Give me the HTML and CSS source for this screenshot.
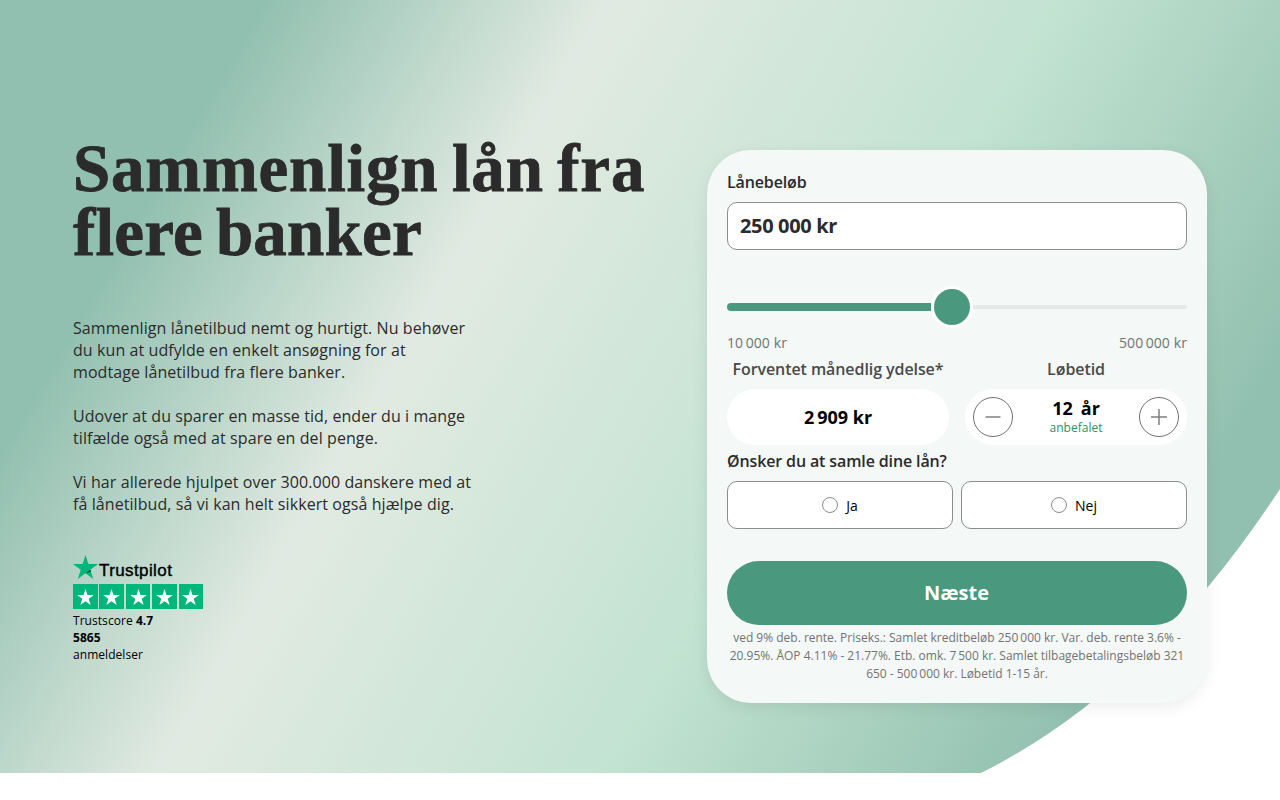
FILE: index.html
```html
<!DOCTYPE html>
<html lang="da">
<head>
    <meta charset="UTF-8">
    <meta name="viewport" content="width=device-width, initial-scale=1.0">
    <title>Sammenlign lån fra flere banker</title>
    <link rel="stylesheet" href="styles.css">
</head>
<body>
    <svg class="defs" width="0" height="0">
        <symbol id="star" viewBox="0 0 24 23">
            <path d="M12 0l2.8 8.7H24l-7.4 5.4L19.4 23 12 17.5 4.6 23l2.8-8.9L0 8.7h9.2z"/>
        </symbol>
    </svg>
    <section class="hero">
        <div class="intro">
            <h1>Sammenlign lån fra <span>flere banker</span></h1>
            <div class="text">
                <p>Sammenlign lånetilbud nemt og hurtigt. Nu behøver du kun at udfylde en enkelt ansøgning for at modtage lånetilbud fra flere banker.</p>
                <p>Udover at du sparer en masse tid, ender du i mange tilfælde også med at spare en del penge.</p>
                <p>Vi har allerede hjulpet over 300.000 danskere med at få lånetilbud, så vi kan helt sikkert også hjælpe dig.</p>
            </div>
            <div class="trustpilot">
                <div class="tp-logo">
                    <svg class="tp-star" viewBox="0 0 24 23">
                        <use href="#star" width="24" height="23"/>
                        <path class="tp-shade" d="M17.3 16.1l-.7-2-4.6 3.4z"/>
                    </svg>
                    <span>Trustpilot</span>
                </div>
                <div class="tp-rating">
                    <span class="tp-box"><svg><use href="#star"/></svg></span>
                    <span class="tp-box"><svg><use href="#star"/></svg></span>
                    <span class="tp-box"><svg><use href="#star"/></svg></span>
                    <span class="tp-box"><svg><use href="#star"/></svg></span>
                    <span class="tp-box"><svg><use href="#star"/></svg></span>
                </div>
                <div class="tp-text">Trustscore <b>4.7</b><br><b>5865</b><br>anmeldelser</div>
            </div>
        </div>

        <form class="card">
            <label class="label" for="amount">Lånebeløb</label>
            <input class="amount" id="amount" type="text" value="250 000 kr">
            <div class="slider">
                <div class="slider-fill"></div>
                <div class="slider-thumb"></div>
                <div class="slider-rest"></div>
            </div>
            <div class="range">
                <span>10&thinsp;000 kr</span>
                <span>500&thinsp;000 kr</span>
            </div>
            <div class="row">
                <div class="col">
                    <div class="col-title">Forventet månedlig ydelse*</div>
                    <div class="pill monthly">2&thinsp;909 kr</div>
                </div>
                <div class="col">
                    <div class="col-title">Løbetid</div>
                    <div class="pill years">
                        <button type="button" class="round" aria-label="Minus">
                            <svg viewBox="0 0 16 16"><path d="M.5 8h15"/></svg>
                        </button>
                        <div class="years-value">
                            <b>12</b><b>år</b>
                            <small>anbefalet</small>
                        </div>
                        <button type="button" class="round" aria-label="Plus">
                            <svg viewBox="0 0 16 16"><path d="M0 8h16M8 0v16"/></svg>
                        </button>
                    </div>
                </div>
            </div>
            <div class="label question">Ønsker du at samle dine lån?</div>
            <div class="choices">
                <label class="choice"><input type="radio" name="collect">Ja</label>
                <label class="choice"><input type="radio" name="collect">Nej</label>
            </div>
            <button type="button" class="next">Næste</button>
            <p class="terms">ved 9% deb. rente. Priseks.: Samlet kreditbeløb 250&thinsp;000 kr. Var. deb. rente 3.6% - 20.95%. ÅOP 4.11% - 21.77%. Etb. omk. 7&thinsp;500 kr. Samlet tilbagebetalingsbeløb 321 650 - 500&thinsp;000 kr. Løbetid 1-15 år.</p>
        </form>
    </section>
</body>
</html>
```
FILE: styles.css
```css
* {
    box-sizing: border-box;
}
body {
    margin: 0;
    background: #fff;
    color: #2b2b2b;
    font-family: "Open Sans", sans-serif;
    overflow: hidden;
}
.defs {
    display: block;
}
.hero {
    position: relative;
    display: flex;
    align-items: flex-start;
    justify-content: space-between;
    height: 773px;
    padding: 0 73px;
}
.hero::before {
    content: "";
    position: absolute;
    inset: 0;
    z-index: -1;
    background: linear-gradient(120.3deg, #92c0b0 15.4%, #e1eae2 35.2%, #c3e3d1 61.2%, #92c0b0 86%);
    clip-path: path("M0 0H1280V489Q1149 689 981 773H0Z");
}
.intro {
    width: 600px;
    padding-top: 136px;
}
h1 {
    margin: 0;
    font-family: "Liberation Serif", serif;
    font-size: 67px;
    font-weight: 700;
    line-height: 64px;
    letter-spacing: 0.8px;
    word-spacing: -4px;
    white-space: nowrap;
    -webkit-text-stroke: 0.8px #2b2b2b;
}
h1 span {
    display: block;
    letter-spacing: 0.2px;
}
.text {
    width: 402px;
    margin-top: 53px;
    font-size: 16px;
    line-height: 22px;
    letter-spacing: 0.08px;
}
.text p {
    margin: 0 0 22px;
}
.trustpilot {
    width: 130px;
    margin-top: 40px;
    color: #000;
}
.tp-logo {
    display: flex;
    align-items: flex-end;
    height: 24px;
    font-family: "Liberation Sans", sans-serif;
    font-size: 17px;
    line-height: 20px;
    letter-spacing: 0.4px;
    -webkit-text-stroke: 0.4px #000;
}
.tp-logo span {
    margin: 0 0 -2px 1px;
}
.tp-star {
    width: 25px;
    height: 24px;
    fill: #00b67a;
}
.tp-shade {
    fill: #005128;
}
.tp-rating {
    display: flex;
    justify-content: space-between;
    margin-top: 5px;
}
.tp-box {
    display: flex;
    align-items: center;
    justify-content: center;
    width: 24.5px;
    height: 25px;
    background: #00b67a;
}
.tp-box svg {
    width: 17px;
    height: 16px;
    fill: #fff;
}
.tp-text {
    margin-top: 3px;
    font-size: 12px;
    line-height: 17px;
    letter-spacing: 0.05px;
}
.card {
    width: 500px;
    height: 553px;
    margin-top: 150px;
    padding: 20px;
    border-radius: 44px;
    background: #f4f8f7;
    box-shadow: 0 4px 16px rgba(0,0,0,0.08);
}
.label {
    display: block;
    font-size: 16px;
    font-weight: 600;
    line-height: 24px;
    letter-spacing: -0.13px;
}
.amount {
    display: block;
    width: 100%;
    height: 48px;
    margin-top: 8px;
    padding: 0 12px 2px;
    border: 1px solid #8c8c8c;
    border-radius: 10px;
    background: #fff;
    color: #2b2b2b;
    font: 700 20px "Open Sans", sans-serif;
    letter-spacing: -0.35px;
}
.slider {
    display: flex;
    align-items: center;
    height: 42px;
    margin-top: 36px;
}
.slider-fill {
    width: 204px;
    height: 8px;
    border-radius: 4px 0 0 4px;
    background: #4a987e;
}
.slider-thumb {
    width: 42px;
    height: 42px;
    border: 3px solid #fff;
    border-radius: 50%;
    background: #4a987e;
}
.slider-rest {
    flex: 1;
    height: 4px;
    border-radius: 0 2px 2px 0;
    background: #e7e8e8;
}
.range {
    display: flex;
    justify-content: space-between;
    margin-top: 5px;
    color: #737373;
    font-size: 14px;
    line-height: 20px;
    letter-spacing: 0.1px;
}
.row {
    display: flex;
    gap: 16px;
    margin-top: 4px;
}
.col {
    flex: 1;
    text-align: center;
}
.col-title {
    color: #4a4a4a;
    font-size: 16px;
    font-weight: 600;
    line-height: 24px;
    letter-spacing: -0.08px;
}
.pill {
    height: 56px;
    margin-top: 8px;
    border-radius: 28px;
    background: #fff;
    color: #000;
    font-size: 18px;
}
.monthly {
    font-weight: 700;
    line-height: 56px;
}
.years {
    display: flex;
    align-items: center;
    justify-content: space-between;
    padding: 0 8px;
}
.round {
    display: flex;
    align-items: center;
    justify-content: center;
    width: 40px;
    height: 40px;
    padding: 0;
    border: 1px solid #6e6e6e;
    border-radius: 50%;
    background: #fff;
}
.round svg {
    width: 16px;
    height: 16px;
    stroke: #808080;
    stroke-width: 1.5;
}
.years-value {
    line-height: 20px;
}
.years-value b + b {
    margin-left: 8px;
}
.years-value small {
    display: block;
    color: #2a9460;
    font-size: 12px;
    line-height: 19px;
}
.question {
    margin-top: 4px;
}
.choices {
    display: flex;
    gap: 8px;
    margin-top: 8px;
}
.choice {
    flex: 1;
    display: flex;
    align-items: center;
    justify-content: center;
    gap: 8px;
    height: 48px;
    border: 1px solid #8c8c8c;
    border-radius: 10px;
    background: #fff;
    color: #000;
    font-size: 14px;
}
.choice input {
    appearance: none;
    width: 16px;
    height: 16px;
    margin: 0;
    border: 1px solid #8c8c8c;
    border-radius: 50%;
}
.next {
    display: block;
    width: 100%;
    height: 64px;
    margin-top: 32px;
    padding: 0 1px 2px 0;
    border: none;
    border-radius: 32px;
    background: #4a987e;
    color: #fff;
    font: 700 20px "Open Sans", sans-serif;
    cursor: pointer;
}
.terms {
    margin: 4px 0 0;
    color: #737373;
    font-size: 12px;
    line-height: 18px;
    letter-spacing: -0.01px;
    text-align: center;
}
```
